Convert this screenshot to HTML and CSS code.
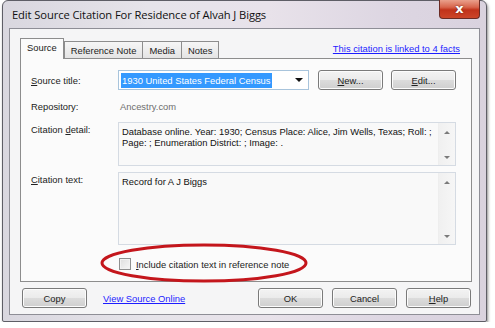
FILE: index.html
```html
<!DOCTYPE html>
<html>
<head>
<meta charset="utf-8">
<link rel="stylesheet" href="styles.css">
</head>
<body>
<div class="window">
  <div class="titlebar">
    <span class="title">Edit Source Citation For Residence of Alvah J Biggs</span>
    <div class="close"><span>x</span></div>
  </div>
  <div class="client">
    <div class="tabrow">
      <div class="tabs">
        <div class="tab active">Source</div>
        <div class="tab">Reference Note</div>
        <div class="tab">Media</div>
        <div class="tab">Notes</div>
      </div>
      <a class="link facts">This citation is linked to 4 facts</a>
    </div>
    <div class="panel">
      <div class="row r-title">
        <div class="label"><u>S</u>ource title:</div>
        <div class="combo"><span class="sel">1930 United States Federal Census</span><span class="arrow"></span></div>
        <button class="btn btn-new"><u>N</u>ew...</button>
        <button class="btn"><u>E</u>dit...</button>
      </div>
      <div class="row r-repo">
        <div class="label">Repository:</div>
        <div class="value">Ancestry.com</div>
      </div>
      <div class="row r-detail">
        <div class="label">Citation <u>d</u>etail:</div>
        <div class="textbox tb-detail">
          <div class="tb-text">Database online. Year: 1930; Census Place: Alice, Jim Wells, Texas; Roll: ;<br>Page: ; Enumeration District: ; Image: .</div>
          <div class="scroll"><span class="up"></span><span class="down"></span></div>
        </div>
      </div>
      <div class="row r-text">
        <div class="label"><u>C</u>itation text:</div>
        <div class="textbox tb-text2">
          <div class="tb-text">Record for A J Biggs</div>
          <div class="scroll"><span class="up"></span><span class="down"></span></div>
        </div>
      </div>
      <div class="row r-check">
        <span class="checkbox"></span>
        <span class="checklabel"><u>I</u>nclude citation text in reference note</span>
      </div>
      <svg class="ellipse" width="212" height="42" viewBox="0 0 212 42"><ellipse cx="106" cy="21" rx="102" ry="18" fill="none" stroke="#c4161c" stroke-width="3"/></svg>
    </div>
    <div class="bottom">
      <button class="btn btn-copy">Copy</button>
      <a class="link view">View Source Online</a>
      <div class="spacer"></div>
      <button class="btn">OK</button>
      <button class="btn">Cancel</button>
      <button class="btn"><u>H</u>elp</button>
    </div>
  </div>
</div>
</body>
</html>
```
FILE: styles.css
```css
* { box-sizing: border-box; }
html, body { margin: 0; padding: 0; background: #ffffff; }
body { font-family: "Liberation Sans", Arial, sans-serif; font-size: 9.4px; color: #222; }

.window {
  margin-left: 2px;
  width: 485px;
  height: 322px;
  border: 1px solid #5e5e66;
  border-radius: 6px 6px 2px 2px;
  background: linear-gradient(90deg, #d9d7df 0%, #e6e4ea 30%, #e8e2ea 55%, #ddd6e2 80%, #d9d2de 100%);
  box-shadow: 1px 2px 3px rgba(0,0,0,0.45);
  padding: 0 6px 6px 6px;
  display: flex;
  flex-direction: column;
}
.titlebar {
  height: 27px;
  position: relative;
  display: flex;
  align-items: center;
  padding-left: 3px;
}
.title { font-family: "Open Sans", sans-serif; font-size: 11.2px; color: #111; letter-spacing: -0.1px; }
.close {
  position: absolute;
  right: 0;
  top: -1px;
  width: 41px;
  height: 19px;
  border: 1px solid #6b2b24;
  border-top: none;
  border-radius: 0 0 4px 4px;
  background: linear-gradient(#eaa08c 0%, #d8654c 40%, #c1321a 55%, #cc4528 100%);
  display: flex;
  align-items: center;
  justify-content: center;
}
.close span { color: #fff; font-family: "DejaVu Sans", sans-serif; font-weight: bold; font-size: 13px; line-height: 1; margin-top: -2px; text-shadow: 0 0 2px #5a1a10; }

.client {
  flex: 1;
  background: #f5f5f6;
  border: 1px solid #8e8e96;
  padding: 9px 7px 0 10px;
  display: flex;
  flex-direction: column;
}
.tabrow { display: flex; align-items: flex-end; height: 20px; }
.tabs { display: flex; align-items: flex-end; }
.tab {
  height: 17px;
  padding: 0 6px;
  border: 1px solid #8d8d8d;
  border-bottom: none;
  margin-left: -1px;
  background: linear-gradient(#f6f6f6, #e4e4e4);
  display: flex;
  align-items: center;
}
.tab.active {
  background: #fbfbfb;
  margin-left: 0;
  padding: 0 6px 3px 6px;
  position: relative;
  z-index: 2;
  margin-bottom: -1px;
  height: 21px;
}
.tabs .tab:nth-child(2) { margin-left: 0; }
.link { color: #1d1dff; text-decoration: underline; cursor: pointer; }
.facts { margin-left: auto; margin-right: 12px; margin-bottom: 4px; }

.panel {
  position: relative;
  height: 224px;
  background: #fbfbfb;
  border: 1px solid #8d8d8d;
  padding: 11px 15px 0 10px;
}
.row { display: flex; }
.label { width: 87px; flex: none; }
.r-title { align-items: center; height: 20px; }
.combo {
  width: 191px;
  height: 20px;
  border: 1px solid #a8c4dc;
  background: #fff;
  display: flex;
  align-items: center;
  padding-left: 2px;
  position: relative;
}
.sel { background: #3399ff; color: #fff; padding: 1px 1px; line-height: 13px; }
.arrow {
  position: absolute; right: 5px; top: 7px;
  width: 0; height: 0;
  border-left: 4px solid transparent; border-right: 4px solid transparent; border-top: 4px solid #111;
}
.btn {
  font-family: inherit; font-size: 9.4px; color: #222;
  width: 65px; height: 20px;
  border: 1px solid #7a7a7a;
  border-radius: 3px;
  background: linear-gradient(#f3f3f3 0%, #ebebeb 48%, #dcdcdc 52%, #cfcfcf 100%);
  box-shadow: inset 0 0 0 1px #fcfcfc;
  padding: 0;
  margin: 0;
}
.btn-new { margin-left: 9px; margin-right: 8px; }
.r-repo { height: 14px; margin-top: 9px; align-items: center; }
.value { color: #6e6e6e; padding-left: 2px; }
.r-detail { margin-top: 9px; }
.r-detail .label, .r-text .label { padding-top: 2px; }
.textbox {
  width: 338px;
  border: 1px solid #d5dbe3;
  background: #f9f9f9;
  display: flex;
}
.tb-detail { height: 44px; }
.tb-text2 { height: 73px; }
.r-text { margin-top: 6px; }
.tb-text { flex: 1; padding: 3px 0 0 3px; line-height: 11px; color: #111; }
.scroll {
  width: 17px;
  background: linear-gradient(90deg, #f0f0f0, #f6f6f6);
  border-left: 1px solid #eee;
  display: flex; flex-direction: column; justify-content: space-between; align-items: center;
  padding: 8px 0 6px;
}
.up { width: 0; height: 0; border-left: 3px solid transparent; border-right: 3px solid transparent; border-bottom: 3px solid #7a7a7a; }
.down { width: 0; height: 0; border-left: 3px solid transparent; border-right: 3px solid transparent; border-top: 3px solid #7a7a7a; }
.r-check { margin-top: 13px; padding-left: 88px; align-items: center; height: 12px; }
.checkbox {
  width: 12px; height: 12px;
  border: 1px solid #8f8f8f;
  background: linear-gradient(135deg, #dedede, #f7f7f7);
  box-shadow: inset 0 0 0 1px #f2f2f2;
  margin-right: 5px;
}
.ellipse { position: absolute; left: 77px; top: 183px; }

.bottom { display: flex; align-items: center; margin-top: 6px; padding-right: 1px; }
.btn-copy { margin-left: 2px; }
.view { margin-left: 16px; margin-top: 1px; }
.spacer { flex: 1; }
.bottom .btn + .btn { margin-left: 9px; }
```
